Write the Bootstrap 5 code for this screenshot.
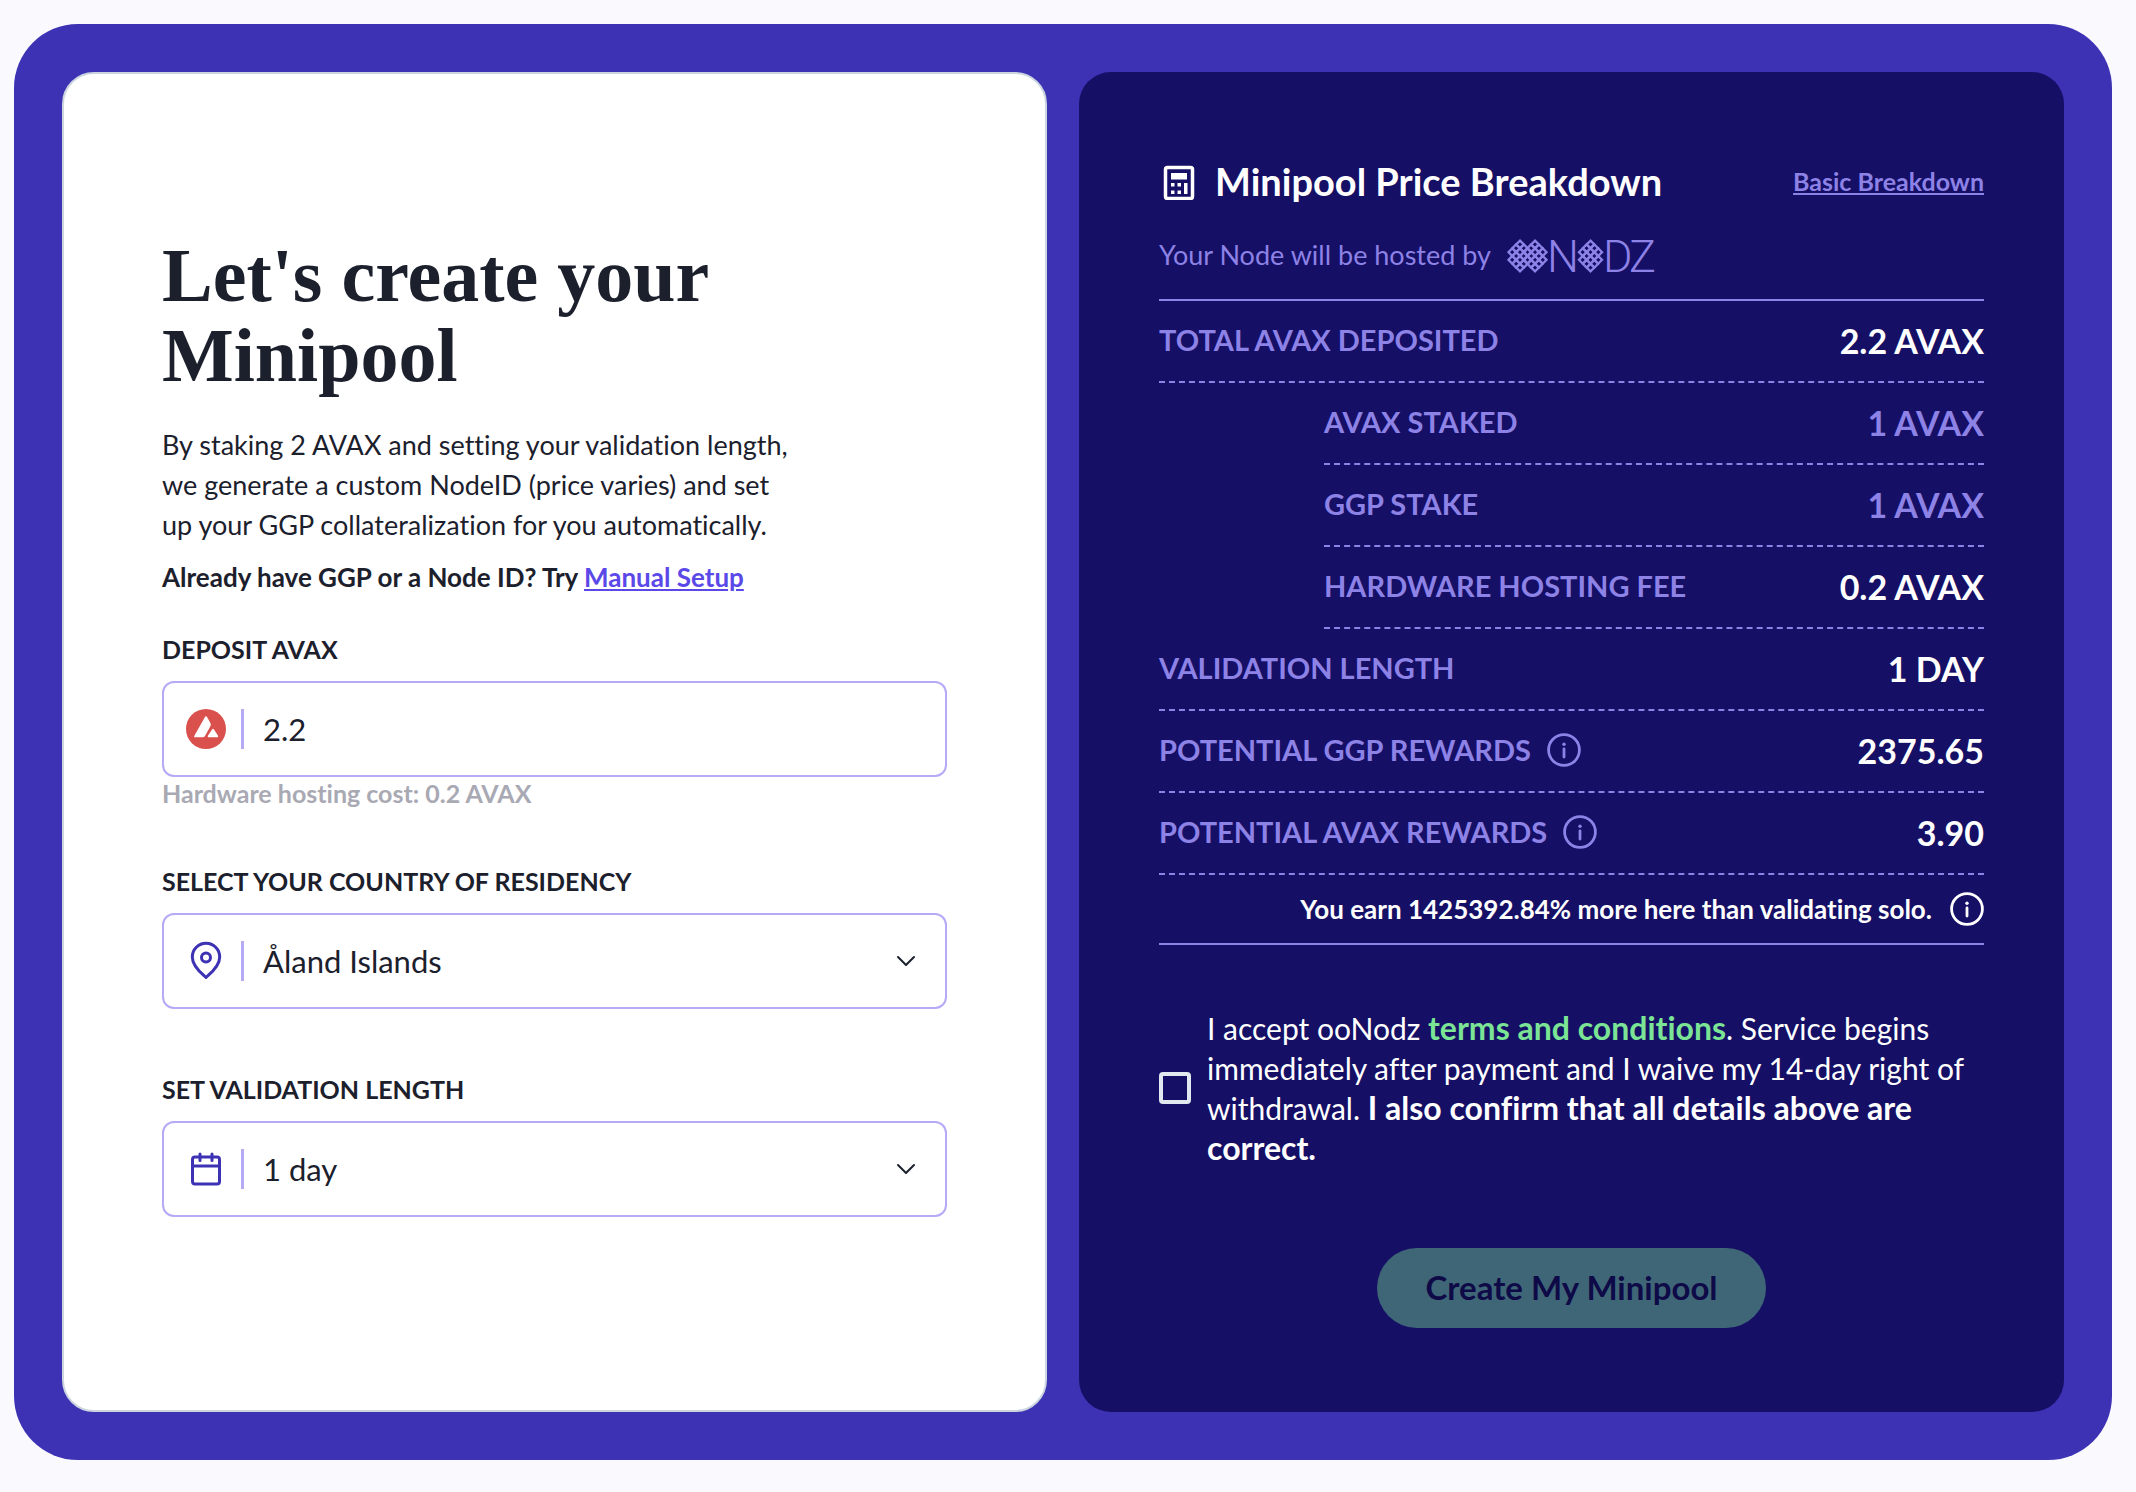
<!DOCTYPE html>
<html lang="en">
<head>
<meta charset="utf-8">
<meta name="viewport" content="width=device-width, initial-scale=1">
<title>Create Minipool</title>
<link href="https://cdn.jsdelivr.net/npm/bootstrap@5.3.0/dist/css/bootstrap.min.css" rel="stylesheet">
<style>
:root{--ink:#1b202c;--frame:#3d32b4;--deep:#150f65;--lilac:#8d82e6;--edge:#b5aaf5}
body{background:#f9f9fe;color:var(--ink);font-family:Lato,"Open Sans",sans-serif;font-variant-ligatures:none}
.page-pad{padding:24px 24px 32px 14px}
.frame{background:var(--frame);border-radius:64px;padding:48px;gap:32px;grid-template-columns:minmax(0,1fr) minmax(0,1fr)}
.panel{border-radius:32px;min-height:1340px}
.panel-form{background:#fff;border:2px solid #cbd5e0;padding:0 98px 32px}
.panel-price{background:var(--deep);padding:80px}
.headline{font-family:"Liberation Serif",serif;font-weight:700;font-size:76px;line-height:80px;margin-bottom:30px;max-width:640px}
.intro{font-size:27px;line-height:40px;max-width:640px;margin-bottom:16px}
.note{font-size:26px;line-height:32px;font-weight:700;margin-bottom:40px}
.note a{color:#5b48e8}
.field-label{font-size:25px;line-height:32px;font-weight:700;text-transform:uppercase;margin-bottom:16px}
.field{height:96px;border:2px solid var(--edge);border-radius:12px;padding-left:22px}
.field-icon{width:40px;height:40px;flex:none}
.field-bar{width:3px;height:40px;background:var(--edge);flex:none;margin:0 19px 0 15px}
.field .form-control,.field .form-select{border:0;background-color:transparent;font-size:31px;height:92px;padding:0;color:var(--ink);border-radius:10px;box-shadow:none}
.field .form-select{background-image:url("data:image/svg+xml,%3csvg xmlns='http://www.w3.org/2000/svg' viewBox='0 0 24 24'%3e%3cpath fill='none' stroke='%231b202c' stroke-width='2' stroke-linecap='round' stroke-linejoin='round' d='M4 8l8 8 8-8'/%3e%3c/svg%3e");background-size:24px 24px;background-position:right 27px center}
.hint{font-size:25px;line-height:32px;font-weight:700;color:#a9a9b3}
.gap-a{margin-top:56px}
.gap-b{margin-top:64px}
.price-head{height:60px}
.price-title{font-size:38px;font-weight:700;color:#fff;margin:0}
.basic-link{font-size:25px;font-weight:700;color:var(--lilac)}
.hosted{height:89px;border-bottom:2px solid var(--lilac);color:var(--lilac);font-size:27px}
.price-row{height:82px;padding-bottom:2px;border-bottom:2px dashed var(--lilac);color:var(--lilac);font-size:29px;font-weight:700}
.price-row dt{font-weight:700;text-transform:uppercase}
.price-row dd{margin:0;font-size:34px}
.price-sub{margin-left:20%}
.lit{color:#fff}
.solo{height:70px;border-bottom:2px solid var(--lilac);color:#fff;font-size:26px;font-weight:700;gap:18px}
.info{width:34px;height:34px;flex:none}
.terms{margin-top:63px;gap:16px;font-size:30px;line-height:40px;color:#fff}
.terms a,.terms b{font-size:32px;line-height:32px;font-weight:700}
.terms a{color:#7be495}
.terms .form-check-input{width:32px;height:32px;margin:0;flex:none;border:4px solid #e2e8f0;border-radius:4px;background-color:transparent}
.btn-create{height:80px;padding:0 48px;border-radius:40px;font-size:33px;font-weight:700;margin-top:80px}
.btn-create:disabled{background:#3f6677;border:0;color:#0e0a47;opacity:1}
</style>
</head>
<body>
<svg class="d-none" aria-hidden="true">
<symbol id="info" viewBox="0 0 34 34"><circle cx="17" cy="17" r="15.4" fill="none" stroke="currentColor" stroke-width="2.8"/><circle cx="17" cy="11.2" r="1.7" fill="currentColor"/><path d="M17 16v8" stroke="currentColor" stroke-width="2.8" stroke-linecap="round"/></symbol>
</svg>
<main class="page-pad">
<div class="frame d-grid">
<section class="panel panel-form d-flex flex-column justify-content-center">
<h1 class="headline">Let's create your Minipool</h1>
<p class="intro">By staking 2 AVAX and setting your validation length, we generate a custom NodeID (price varies) and set up your GGP collateralization for you automatically.</p>
<p class="note">Already have GGP or a Node ID? Try <a href="#">Manual Setup</a></p>
<form>
<div>
<label class="field-label d-block" for="deposit">Deposit AVAX</label>
<div class="field d-flex align-items-center">
<svg class="field-icon" viewBox="0 0 40 40" aria-hidden="true"><circle cx="20" cy="20" r="20" fill="#d9504c"/><path d="M18.8 8.3q1.2-2 2.4 0l3.2 5.8q.9 1.600 0 3.200L19 27q-.8 1.300-2.300 1.300H9.500q-2.100 0-1-1.900zM26 20.500q1-1.700 2 0l3.900 6q1 1.800-1 1.800h-7.900q-2 0-1-1.800z" fill="#fff"/></svg>
<span class="field-bar"></span>
<input class="form-control" id="deposit" type="text" inputmode="decimal" value="2.2">
</div>
<div class="hint">Hardware hosting cost: 0.2 AVAX</div>
</div>
<div class="gap-a">
<label class="field-label d-block" for="country">Select your country of residency</label>
<div class="field d-flex align-items-center">
<svg class="field-icon" viewBox="0 0 40 40" fill="none" stroke="#3d32b4" stroke-width="3" stroke-linejoin="round" aria-hidden="true"><path d="M20 36.500C17 33.500 6.300 26 6.300 16a13.700 13.700 0 0 1 27.400 0C33.700 26 23 33.500 20 36.500z"/><circle cx="20" cy="16.500" r="4.500"/></svg>
<span class="field-bar"></span>
<select class="form-select" id="country"><option>Åland Islands</option></select>
</div>
</div>
<div class="gap-b">
<label class="field-label d-block" for="length">Set validation length</label>
<div class="field d-flex align-items-center">
<svg class="field-icon" viewBox="0 0 40 40" fill="none" stroke="#3d32b4" stroke-width="3" stroke-linecap="round" stroke-linejoin="round" aria-hidden="true"><rect x="6.500" y="8" width="27" height="27" rx="2.500"/><path d="M6.500 17h27M14 5v6.500M26 5v6.500"/></svg>
<span class="field-bar"></span>
<select class="form-select" id="length"><option>1 day</option></select>
</div>
</div>
</form>
</section>
<section class="panel panel-price">
<div class="price-head d-flex align-items-center justify-content-between">
<div class="d-flex align-items-center">
<svg class="me-3" width="40" height="36" viewBox="0 0 40 36" aria-hidden="true"><rect x="6.500" y="3.500" width="27" height="31" rx="2" fill="none" stroke="#fff" stroke-width="3.500"/><path fill="#fff" d="M12 9h16v6.500H12zM12 19h3.500v3.500H12zM18.500 19H22v3.500h-3.500zM25 19h3.500v11H25zM12 26.500h3.500V30H12zM18.500 26.500H22V30h-3.500z"/></svg>
<h2 class="price-title">Minipool Price Breakdown</h2>
</div>
<a class="basic-link" href="#">Basic Breakdown</a>
</div>
<div class="hosted d-flex align-items-center">
<span class="me-3">Your Node will be hosted by</span>
<svg width="152" height="64" viewBox="0 -14 152 64" role="img" aria-label="ooNodz">
<defs>
<path id="ring" d="M0-3.850L3.850 0 0 3.850-3.850 0z" fill="none" stroke="currentColor" stroke-width="2.300"/>
<g id="knot">
<use href="#ring" y="-11.550"/>
<use href="#ring" x="-3.850" y="-7.700"/><use href="#ring" x="3.850" y="-7.700"/>
<use href="#ring" x="-7.700" y="-3.850"/><use href="#ring" y="-3.850"/><use href="#ring" x="7.700" y="-3.850"/>
<use href="#ring" x="-3.850"/><use href="#ring" x="3.850"/>
<use href="#ring" x="-7.700" y="3.850"/><use href="#ring" y="3.850"/><use href="#ring" x="7.700" y="3.850"/>
<use href="#ring" x="-3.850" y="7.700"/><use href="#ring" x="3.850" y="7.700"/>
<use href="#ring" y="11.550"/>
</g>
</defs>
<use href="#knot" x="13" y="18"/><use href="#knot" x="28" y="18"/><use href="#knot" x="83.500" y="18"/>
<g font-family="Roboto" font-weight="300" font-size="45" fill="currentColor"><text x="40" y="34">N</text><text x="96" y="34">D</text><text x="122" y="34">Z</text></g>
</svg>
</div>
<dl class="m-0">
<div class="price-row d-flex align-items-center justify-content-between"><dt>Total AVAX deposited</dt><dd class="lit">2.2 AVAX</dd></div>
<div class="price-row price-sub d-flex align-items-center justify-content-between"><dt>AVAX staked</dt><dd>1 AVAX</dd></div>
<div class="price-row price-sub d-flex align-items-center justify-content-between"><dt>GGP stake</dt><dd>1 AVAX</dd></div>
<div class="price-row price-sub d-flex align-items-center justify-content-between"><dt>Hardware hosting fee</dt><dd class="lit">0.2 AVAX</dd></div>
<div class="price-row d-flex align-items-center justify-content-between"><dt>Validation length</dt><dd class="lit">1 DAY</dd></div>
<div class="price-row d-flex align-items-center justify-content-between"><dt class="d-flex align-items-center">Potential GGP rewards<svg class="info ms-3" aria-hidden="true"><use href="#info"/></svg></dt><dd class="lit">2375.65</dd></div>
<div class="price-row d-flex align-items-center justify-content-between"><dt class="d-flex align-items-center">Potential AVAX rewards<svg class="info ms-3" aria-hidden="true"><use href="#info"/></svg></dt><dd class="lit">3.90</dd></div>
</dl>
<div class="solo d-flex align-items-center justify-content-end"><span>You earn 1425392.84% more here than validating solo.</span><svg class="info" aria-hidden="true"><use href="#info"/></svg></div>
<div class="terms d-flex align-items-center">
<input class="form-check-input" type="checkbox" id="accept">
<label for="accept">I accept ooNodz <a class="text-decoration-none" href="#">terms and conditions</a>. Service begins immediately after payment and I waive my 14-day right of withdrawal. <b>I also confirm that all details above are correct.</b></label>
</div>
<div class="d-flex justify-content-center"><button class="btn btn-create" type="button" disabled>Create My Minipool</button></div>
</section>
</div>
</main>
<script src="https://cdn.jsdelivr.net/npm/bootstrap@5.3.0/dist/js/bootstrap.bundle.min.js"></script>
</body>
</html>
